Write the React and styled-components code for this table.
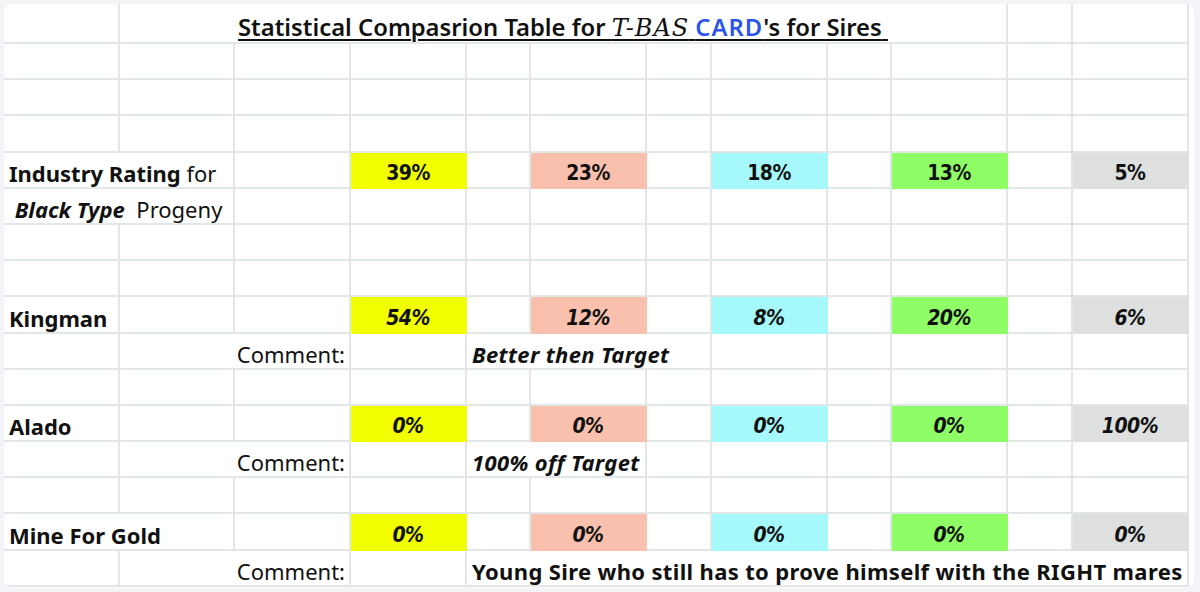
import React from 'react';
import styled, { createGlobalStyle } from 'styled-components';

const GlobalStyle = createGlobalStyle`
  html, body {
    margin: 0;
    background: #f3f4f8;
  }
  body {
    font-family: "Noto Sans", "Liberation Sans", sans-serif;
    color: #111;
  }
`;

const Page = styled.div`
  padding: 4px 6px 4px 4px;
`;

const Card = styled.div`
  width: 1190px;
  height: 584px;
  background: #fff;
  border-radius: 8px;
  overflow: hidden;
`;

// column widths follow the spreadsheet, narrow spacer columns between the coloured ones
const Sheet = styled.div`
  display: grid;
  grid-template-columns: 116px 115px 116px 116px 64px 116px 65px 116px 64px 116px 65px 116px;
  grid-template-rows: 40px repeat(15, 36.2px);
`;

const Cell = styled.div`
  box-sizing: border-box;
  grid-column: span ${(p) => p.$span || 1};
  display: flex;
  align-items: flex-end;
  justify-content: ${(p) =>
    p.$align === 'center' ? 'center' : p.$align === 'right' ? 'flex-end' : 'flex-start'};
  padding: 0 ${(p) => (p.$align === 'right' ? '4px' : '0')} 1px ${(p) => (p.$align ? '0' : '5px')};
  border-right: 2px solid ${(p) => (p.$fill ? 'transparent' : '#e1e6e6')};
  border-bottom: 2px solid ${(p) => (p.$fill ? 'transparent' : '#e1e6e6')};
  background: ${(p) => p.$fill || 'transparent'};
  font-size: 22px;
  line-height: 26px;
  white-space: pre;
  overflow: visible;
`;

const Title = styled.span`
  font-size: 23.8px;
  font-weight: 600;
  text-decoration: underline;
  text-decoration-thickness: 1.5px;
  text-underline-offset: 3px;
`;

const SerifItalic = styled.span`
  font-family: "DejaVu Serif", "Liberation Serif", serif;
  font-style: italic;
  font-weight: 500;
  font-size: 24px;
  letter-spacing: 1px;
`;

const Blue = styled.span`
  color: #2a55ea;
  letter-spacing: 1px;
`;

const Bold = styled.span`
  font-weight: 700;
  font-style: ${(p) => (p.$italic ? 'italic' : 'normal')};
  letter-spacing: ${(p) => (p.$wide ? '0.35px' : 'normal')};
`;

const Pct = styled.span`
  font-family: "DejaVu Sans Condensed", "Liberation Sans Narrow", "DejaVu Sans", sans-serif;
  font-stretch: condensed;
  font-weight: 700;
  font-size: 21px;
  font-style: ${(p) => (p.$italic ? 'italic' : 'normal')};
  letter-spacing: -0.5px;
`;

const FILLS = ['#f2ff00', '#f9c1ad', '#a6f9fb', '#8efd66', '#dde0df'];

function Empty({ count }) {
  return Array.from({ length: count }, (_, i) => <Cell key={i} />);
}

function ValueCells({ values, italic }) {
  return values.map((v, i) => (
    <React.Fragment key={i}>
      <Cell $fill={FILLS[i]} $align="center">
        <Pct $italic={italic}>{v}</Pct>
      </Cell>
      {i < values.length - 1 && <Cell />}
    </React.Fragment>
  ));
}

function SireRow({ name, span, values }) {
  return (
    <>
      <Cell $span={span}>
        <Bold>{name}</Bold>
      </Cell>
      <Empty count={3 - span} />
      <ValueCells values={values} italic />
    </>
  );
}

function CommentRow({ span, children, rest }) {
  return (
    <>
      <Cell />
      <Cell $span={2} $align="right">Comment:</Cell>
      <Cell />
      <Cell $span={span}>
        <Bold $italic={rest !== undefined} $wide>{children}</Bold>
      </Cell>
      <Empty count={rest || 0} />
    </>
  );
}

export default function App() {
  return (
    <>
      <GlobalStyle />
      <Page>
        <Card>
          <Sheet>
            <Cell />
            <Cell $span={9} $align="center">
              <Title>
                Statistical Compasrion Table for <SerifItalic>T-BAS</SerifItalic>{' '}
                <Blue>CARD</Blue>'s for Sires{' '}
              </Title>
            </Cell>
            <Empty count={2} />

            <Empty count={36} />

            <Cell $span={2}>
              <span>
                <Bold>Industry Rating</Bold> for
              </span>
            </Cell>
            <Cell />
            <ValueCells values={['39%', '23%', '18%', '13%', '5%']} />

            <Cell $span={2}>
              <span>
                {' '}
                <Bold $italic>Black Type</Bold>{'  '}Progeny
              </span>
            </Cell>
            <Empty count={10} />

            <Empty count={24} />

            <SireRow name="Kingman" span={1} values={['54%', '12%', '8%', '20%', '6%']} />
            <CommentRow span={3} rest={5}>Better then Target</CommentRow>
            <Empty count={12} />

            <SireRow name="Alado" span={1} values={['0%', '0%', '0%', '0%', '100%']} />
            <CommentRow span={2} rest={6}>100% off Target</CommentRow>
            <Empty count={12} />

            <SireRow name="Mine For Gold" span={2} values={['0%', '0%', '0%', '0%', '0%']} />
            <CommentRow span={8}>Young Sire who still has to prove himself with the RIGHT mares</CommentRow>
          </Sheet>
        </Card>
      </Page>
    </>
  );
}
